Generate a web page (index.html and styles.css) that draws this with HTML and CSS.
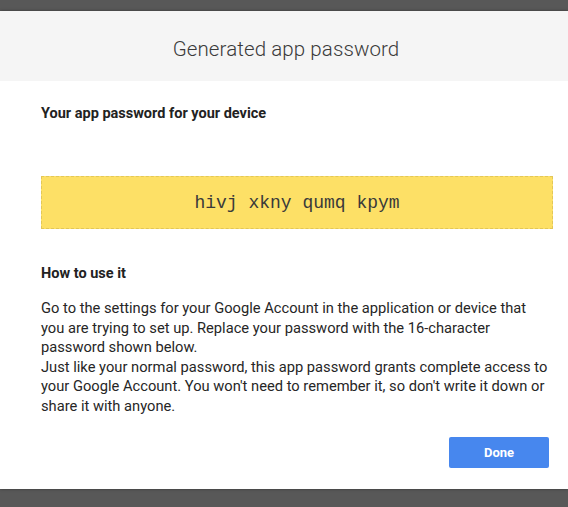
FILE: index.html
```html
<!DOCTYPE html>
<html>
<head>
<meta charset="utf-8">
<link rel="stylesheet" href="styles.css">
</head>
<body>
<div class="page">
  <div class="dialog">
    <div class="header"><h1 class="title">Generated app password</h1></div>
    <div class="content">
      <h2 class="label">Your app password for your device</h2>
      <div class="pwbox"><span class="pw">hivj xkny qumq kpym</span></div>
      <h2 class="label how">How to use it</h2>
      <p class="text">Go to the settings for your Google Account in the application or device that you are trying to set up. Replace your password with the 16-character password shown below.<br>Just like your normal password, this app password grants complete access to your Google Account. You won't need to remember it, so don't write it down or share it with anyone.</p>
      <div class="actions"><button class="done">Done</button></div>
    </div>
  </div>
</div>
</body>
</html>
```

FILE: styles.css
```css
html, body {
  margin: 0;
  padding: 0;
  height: 100%;
}
body {
  background: #585858;
  font-family: Roboto, "Liberation Sans", Arial, sans-serif;
  overflow: hidden;
}
.page {
  padding-top: 11px;
}
.dialog {
  background: #fff;
  height: 478px;
  box-shadow: 0 0 3px rgba(0,0,0,0.4);
  display: flex;
  flex-direction: column;
}
.header {
  background: #f5f5f5;
  height: 70px;
  display: flex;
  align-items: center;
  justify-content: center;
}
.title {
  margin: 0;
  font-size: 20.5px;
  font-weight: 300;
  color: #3a3a3a;
  padding: 6px 0 0 4px;
  letter-spacing: 0.1px;
}
.content {
  padding: 0 15px 0 41px;
  flex: 1;
  display: flex;
  flex-direction: column;
}
.label {
  margin: 25px 0 0;
  font-size: 14.5px;
  font-weight: 700;
  color: #222;
  line-height: 16px;
}
.pwbox {
  margin-top: 54px;
  height: 51px;
  background: #fde066;
  border: 1px dashed #e3c758;
  display: flex;
  align-items: center;
  justify-content: center;
}
.pw {
  font-family: "Liberation Mono", "Courier New", monospace;
  font-size: 18px;
  color: #3a3a3a;
}
.how {
  margin-top: 37px;
}
.text {
  margin: 17px 0 0;
  max-width: 510px;
  font-size: 14.7px;
  line-height: 19.6px;
  color: #262626;
}
.actions {
  display: flex;
  justify-content: flex-end;
  margin-top: 20px;
  padding-right: 4px;
}
.done {
  width: 100px;
  height: 31px;
  border: none;
  border-radius: 2px;
  background: #4787ee;
  color: #fff;
  font-family: Roboto, "Liberation Sans", Arial, sans-serif;
  font-weight: 700;
  font-size: 13px;
  padding: 0;
}
```
